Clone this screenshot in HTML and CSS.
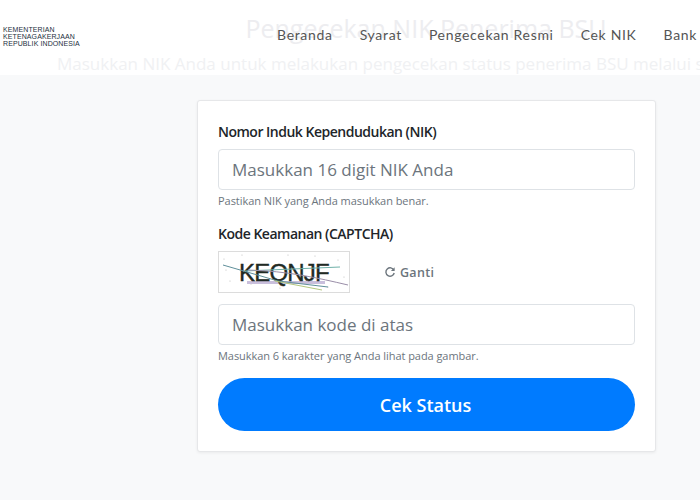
FILE: index.html
```html
<!DOCTYPE html>
<html lang="id">
<head>
<meta charset="utf-8">
<title>Pengecekan NIK Penerima BSU</title>
<link rel="stylesheet" href="styles.css">
</head>
<body>
<div class="page">
  <section class="hero">
    <h1 class="hero-title">Pengecekan NIK Penerima BSU</h1>
    <p class="hero-sub">Masukkan NIK Anda untuk melakukan pengecekan status penerima BSU melalui situs resmi.</p>
  </section>
  <header class="topbar">
    <div class="logo">
      <span>KEMENTERIAN</span>
      <span>KETENAGAKERJAAN</span>
      <span>REPUBLIK INDONESIA</span>
    </div>
    <nav class="nav">
      <a>Beranda</a>
      <a>Syarat</a>
      <a>Pengecekan Resmi</a>
      <a>Cek NIK</a>
      <a>Bank</a>
    </nav>
  </header>
  <main class="main">
    <form class="card">
      <label class="label">Nomor Induk Kependudukan (NIK)</label>
      <div class="input">Masukkan 16 digit NIK Anda</div>
      <p class="hint">Pastikan NIK yang Anda masukkan benar.</p>
      <label class="label label-captcha">Kode Keamanan (CAPTCHA)</label>
      <div class="captcha-row">
        <svg class="captcha" width="132" height="42" viewBox="0 0 132 42">
          <rect x="0.5" y="0.5" width="131" height="41" fill="#fff" stroke="#dcdcdc"/>
          <g fill="#bbb">
            <circle cx="6" cy="8" r=".6"/><circle cx="24" cy="4" r=".6"/><circle cx="33" cy="33" r=".6"/>
            <circle cx="12" cy="30" r=".6"/><circle cx="120" cy="9" r=".6"/><circle cx="126" cy="26" r=".6"/>
            <circle cx="97" cy="5" r=".6"/><circle cx="62" cy="37" r=".6"/><circle cx="8" cy="19" r=".6"/>
            <circle cx="110" cy="36" r=".6"/><circle cx="70" cy="4" r=".6"/>
          </g>
          <path d="M29 31.500H107" stroke="#c9bfdc" stroke-width="3" fill="none"/>
          <text class="captcha-text" x="21" y="30">KEQNJF</text>
          <path d="M5 14L60 30L110 36" stroke="#5f8f9a" stroke-width="1" fill="none"/>
          <path d="M27 20L122 16" stroke="#6fb0a8" stroke-width="1" fill="none"/>
          <path d="M30 19C70 20 100 27 130 34" stroke="#9a8ea8" stroke-width="1" fill="none"/>
          <path d="M57 30L104 39" stroke="#b3c77e" stroke-width="1" fill="none"/>
        </svg>
        <a class="refresh">
          <svg class="refresh-icon" width="12" height="12" viewBox="0 0 12 12">
            <path d="M9.900 4.200A4.200 4.200 0 1 0 10.200 7" fill="none" stroke="#6c757d" stroke-width="1.400"/>
            <path d="M10.600 1.200V4.900H6.900Z" fill="#6c757d"/>
          </svg>
          Ganti
        </a>
      </div>
      <div class="input">Masukkan kode di atas</div>
      <p class="hint">Masukkan 6 karakter yang Anda lihat pada gambar.</p>
      <button class="submit" type="button">Cek Status</button>
    </form>
  </main>
</div>
</body>
</html>
```
FILE: styles.css
```css
html, body {
  margin: 0;
  padding: 0;
  height: 500px;
  overflow: hidden;
}
body {
  background: #f8f9fa;
  font-family: "Open Sans", "Liberation Sans", sans-serif;
}
.page {
  position: relative;
  width: 853px;
  height: 500px;
  overflow: hidden;
}
.hero {
  height: 75px;
  background: #fff;
  text-align: center;
  box-sizing: border-box;
  padding-top: 12px;
}
.hero-title {
  margin: 0;
  padding-right: 1px;
  font-size: 25px;
  line-height: 32px;
  font-weight: 400;
  color: #ededf0;
}
.hero-sub {
  margin: 8px 0 0;
  padding-right: 10px;
  font-size: 17px;
  line-height: 24px;
  color: #f0f1f3;
  white-space: nowrap;
}
.topbar {
  position: absolute;
  left: 0;
  top: 0;
  width: 853px;
  height: 74px;
  display: flex;
  align-items: center;
}
.logo {
  display: flex;
  flex-direction: column;
  margin-left: 3px;
  margin-top: -1px;
  font-family: "Liberation Sans", sans-serif;
  font-size: 7px;
  line-height: 7.3px;
  color: #1d3040;
  letter-spacing: .1px;
}
.nav {
  position: absolute;
  left: 277px;
  top: 25px;
  display: flex;
  gap: 27px;
  font-family: Lato, "Liberation Sans", sans-serif;
  font-size: 14px;
  line-height: 20px;
  letter-spacing: .68px;
  color: #555;
  white-space: nowrap;
}
.main {
  padding-top: 25px;
}
.card {
  margin-left: 197px;
  width: 459px;
  height: 352px;
  box-sizing: border-box;
  padding: 21px 20px 0;
  background: #fff;
  border: 1px solid #e6e7e9;
  border-radius: 3px;
  box-shadow: 0 1px 3px rgba(0, 0, 0, .06);
}
.label {
  display: block;
  font-size: 14px;
  line-height: 20px;
  font-weight: 600;
  letter-spacing: -.5px;
  color: #212529;
}
.label-captcha {
  margin-top: 15px;
}
.input {
  box-sizing: border-box;
  height: 41px;
  margin-top: 7px;
  padding: 0 13px;
  border: 1px solid #dee2e6;
  border-radius: 4px;
  background: #fff;
  font-size: 17px;
  line-height: 39px;
  color: #6c757d;
}
.hint {
  margin: 3px 0 0;
  font-size: 11px;
  line-height: 16px;
  letter-spacing: -.05px;
  color: #6c757d;
}
.captcha-row {
  display: flex;
  align-items: center;
  gap: 34px;
  margin-top: 7px;
  margin-bottom: 4px;
}
.captcha-row + .input {
  margin-top: 11px;
}
.captcha {
  display: block;
}
.captcha-text {
  font-family: "Liberation Sans", sans-serif;
  font-size: 24px;
  fill: #1f2a24;
  stroke: #1f2a24;
  stroke-width: .4px;
  letter-spacing: -.8px;
}
.refresh {
  display: flex;
  align-items: center;
  gap: 4px;
  font-size: 12.5px;
  font-weight: 600;
  color: #6c757d;
  letter-spacing: .3px;
}
.submit {
  display: block;
  width: 100%;
  height: 53px;
  margin-top: 14px;
  padding-right: 8px;
  border: 0;
  border-radius: 27px;
  background: #007bff;
  color: #fff;
  font-family: inherit;
  font-size: 18px;
  font-weight: 600;
}
```
